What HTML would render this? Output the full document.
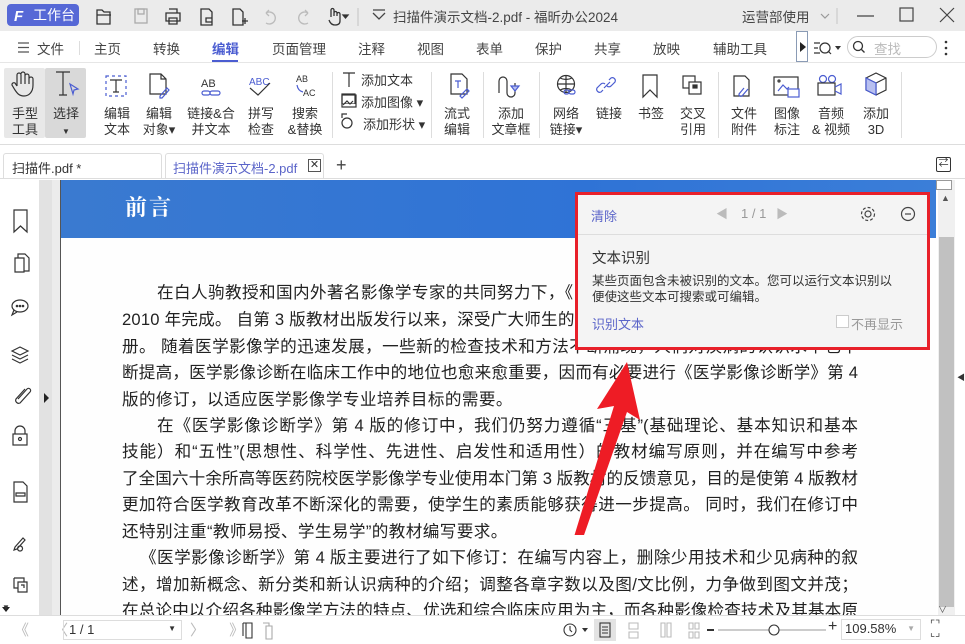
<!DOCTYPE html>
<html><head><meta charset="utf-8"><style>
*{margin:0;padding:0;box-sizing:border-box}
body{width:965px;height:644px;overflow:hidden;position:relative;background:#fff;font-family:"Liberation Sans","Noto Sans CJK SC",sans-serif;color:#333;font-size:13px}
.a{position:absolute}
.tb{left:0;top:0;width:965px;height:31px;background:#ebebeb}
.menu{left:0;top:31px;width:965px;height:32px;background:#fff;border-bottom:1px solid #e6e6e6}
.menu span{position:absolute;top:7px;font-size:13.5px;color:#444}
.rib{left:0;top:63px;width:965px;height:82px;background:#fff;border-bottom:1px solid #ddd}
.btn{position:absolute;top:40px;text-align:center;font-size:13px;line-height:16px;color:#333;white-space:nowrap}
.sep{position:absolute;top:72px;width:1px;height:66px;background:#ddd}
.tabs{left:0;top:145px;width:965px;height:34px;background:#fff;border-bottom:1px solid #ddd}
.ico{position:absolute}
.line{position:absolute;left:122px;width:736px;font-size:16.6px;color:#222;text-align:justify;text-align-last:justify;white-space:nowrap;height:26px;line-height:26px;font-family:"Liberation Sans","Noto Sans CJK SC",sans-serif}
</style></head><body>
<div class="a tb"></div>
<div class="a" style="left:7px;top:4px;width:72px;height:22px;background:#5668d6;border-radius:4px;color:#fff;font-size:14px;line-height:22px;padding-left:26px">工作台</div>
<div class="a" style="left:14px;top:8px;color:#fff;font-size:15px;font-weight:bold;font-style:italic">F</div>
<svg class="a" style="left:90px;top:4px" width="280" height="24" fill="none" stroke="#333" stroke-width="1.3">
<path d="M7 6h5l2 2h6v12H7z M7 11h14"/>
<rect x="45" y="5" width="12" height="14" stroke="#aaa"/><rect x="48" y="5" width="6" height="5" stroke="#aaa"/>
<path d="M76 9h14v8H76z M79 5h8v4 M79 14h8v6h-8z"/>
<path d="M111 5h8l3 3v13h-11z M116 14h6v4h-6z"/>
<path d="M143 5h7l3 3v13h-10z M152 17h6 M155 14v6"/>
<path d="M176 9a6 6 0 1 1 0 10 M176 9l3-3 M176 9l3 3" stroke="#bbb"/>
<path d="M218 9a6 6 0 1 0 0 10 M218 9l-3-3 M218 9l-3 3" stroke="#bbb"/>
<path d="M241 13v-7a1.5 1.5 0 0 1 3 0v6 M244 9a1.5 1.5 0 0 1 3 0v3 M247 10a1.5 1.5 0 0 1 3 0v7c0 3-2 4-5 4s-5-2-6-5"/>
<path d="M253 11h5l-2.5 3z" fill="#333"/>
<path d="M268 4v18" stroke="#ccc"/>
</svg>
<svg class="a" style="left:371px;top:8px" width="16" height="16" fill="none" stroke="#444" stroke-width="1.3"><path d="M2 5l6 6 6-6 M2 2h12"/></svg>
<div class="a" style="left:393px;top:6px;font-size:13.5px;color:#444">扫描件演示文档-2.pdf - 福昕办公2024</div>
<div class="a" style="left:742px;top:6px;font-size:13.5px;color:#444">运营部使用</div>
<svg class="a" style="left:815px;top:5px" width="150" height="22" fill="none" stroke="#444" stroke-width="1.2"><path d="M6 9l4 4 4-4" stroke="#999"/><path d="M22 3v16" stroke="#ccc"/><path d="M42 11h17"/><rect x="85" y="3" width="13" height="13"/><path d="M125 3l14 14 M139 3l-14 14"/></svg>

<div class="a menu">
<svg class="ico" style="left:17px;top:11px" width="14" height="12" stroke="#555" stroke-width="1.3"><path d="M1 1h11M1 5.5h11M1 10h11"/></svg>
<span style="left:37px">文件</span><div class="a" style="left:79px;top:10px;width:1px;height:14px;background:#ddd"></div>
<span style="left:94px">主页</span><span style="left:153px">转换</span>
<span style="left:212px;color:#4b5dd1;font-weight:bold">编辑</span>
<div class="a" style="left:212px;top:29px;width:26px;height:2px;background:#4b5dd1"></div>
<span style="left:272px">页面管理</span><span style="left:358px">注释</span><span style="left:417px">视图</span><span style="left:476px">表单</span><span style="left:535px">保护</span><span style="left:594px">共享</span><span style="left:653px">放映</span><span style="left:713px">辅助工具</span>
<div class="a" style="left:796px;top:0;width:12px;height:31px;border:1px solid #8a9bb5;background:#fff"></div>
<svg class="ico" style="left:799px;top:11px" width="8" height="10"><path d="M1 0v10l6-5z" fill="#222"/></svg>
<svg class="ico" style="left:813px;top:8px" width="30" height="18" fill="none" stroke="#333" stroke-width="1.2"><path d="M1 4h6M1 9h4M1 14h6"/><circle cx="12" cy="9" r="5"/><path d="M15 12l3 3"/><path d="M22 7h6l-3 4z" fill="#333" stroke="none"/></svg>
<div class="a" style="left:847px;top:5px;width:90px;height:22px;border:1px solid #ccc;border-radius:11px"></div>
<svg class="ico" style="left:852px;top:9px" width="14" height="14" fill="none" stroke="#333" stroke-width="1.3"><circle cx="6" cy="6" r="4.5"/><path d="M9.5 9.5l3 3"/></svg>
<span style="left:874px;color:#bbb">查找</span>
<svg class="ico" style="left:944px;top:8px" width="4" height="18"><circle cx="2" cy="3" r="1.3" fill="#333"/><circle cx="2" cy="9" r="1.3" fill="#333"/><circle cx="2" cy="15" r="1.3" fill="#333"/></svg>
</div>

<div class="a rib"></div>
<div class="a" style="left:4px;top:68px;width:41px;height:70px;background:#e8e8e8;border-radius:2px"></div>
<div class="a" style="left:45px;top:68px;width:41px;height:70px;background:#d9d9d9;border-radius:2px"></div>
<svg class="a" style="left:0;top:68px" width="965" height="36" fill="none" stroke="#333" stroke-width="1.2">
<path d="M17 18v-11a2 2 0 0 1 4 0v9 M21 6a2 2 0 0 1 4 0v10 M25 8a2 2 0 0 1 4 0v8 M29 11a2 2 0 0 1 4 0v6c0 7-4 11-9 11s-7-3-9-6l-3-5a2 2 0 0 1 3-2l2 3"/>
<path d="M56 4h14 M63 4v23 M59 27h8"/><path d="M70 16l8 5-4 1-1 4z" stroke="#4b5dd1"/>
<rect x="106" y="8" width="20" height="20" stroke="#4b5dd1" stroke-dasharray="3 3"/><path d="M110 12h12M116 12v12M113 24h6"/>
<path d="M150 6h11l5 5v15h-16z M161 6v5h5"/><path d="M160 28l7-8 2 2-7 8h-2z" stroke="#4b5dd1"/>
<text x="201" y="19" font-size="11" fill="#333" stroke="none" font-family="Liberation Sans">AB</text><rect x="202" y="23" width="8" height="4" rx="2" stroke="#4b5dd1"/><rect x="210" y="23" width="10" height="4" rx="2" stroke="#4b5dd1"/>
<text x="249" y="17" font-size="10" fill="#4b5dd1" stroke="none" font-family="Liberation Sans">ABC</text><path d="M250 20l8 7 12-12"/>
<text x="296" y="14" font-size="9" fill="#333" stroke="none" font-family="Liberation Sans">AB</text><text x="303" y="28" font-size="9" fill="#333" stroke="none" font-family="Liberation Sans">AC</text><path d="M297 17q1 6 6 7" stroke="#4b5dd1"/>
<path d="M343 5h12 M349 5v14"/>
<rect x="342" y="26" width="13" height="10" />
<path d="M451 6h11l5 5v15h-16z"/><path d="M455 13h6M458 13v7" stroke="#4b5dd1"/><path d="M460 28l7-7 2 2-7 7z" stroke="#4b5dd1"/>
<path d="M499 25v-12a4 4 0 0 1 8 0v12a4 4 0 0 0 8 0v-10"/><path d="M511 18h8l-4 5z" stroke="#4b5dd1" fill="#b8c0f0"/>
<circle cx="566" cy="16" r="8.5"/><path d="M557.5 16h17M566 7.5v17M560 10q6 3 12 0M560 22q6-3 12 0"/><rect x="564" y="22" width="5" height="4" rx="2" stroke="#4b5dd1"/><rect x="569" y="22" width="6" height="4" rx="2" stroke="#4b5dd1"/>
<path d="M603 22l-2 2a3 3 0 0 1-4-4l4-4a3 3 0 0 1 4 0 M609 12l2-2a3 3 0 0 1 4 4l-4 4a3 3 0 0 1-4 0 M604 20l6-6" stroke="#4b5dd1"/>
<path d="M643 7h14v22l-7-7-7 7z"/>
<rect x="683" y="8" width="12" height="12"/><rect x="689" y="14" width="12" height="12" fill="#fff"/><rect x="693" y="17" width="4" height="3" fill="#333"/>
<path d="M734 8h11l4 4v16h-15z"/><path d="M744 20l-5 6a2 2 0 0 0 3 2l6-7" stroke="#4b5dd1"/>
<rect x="774" y="9" width="24" height="18"/><path d="M778 23l5-6 4 4 2-2" stroke="#4b5dd1"/><rect x="788" y="21" width="11" height="8" stroke="#4b5dd1" fill="#fff"/><circle cx="779" cy="13" r="1"/>
<circle cx="823" cy="11" r="3.5" stroke="#4b5dd1"/><circle cx="832" cy="11" r="3.5" stroke="#4b5dd1"/><rect x="818" y="15" width="17" height="12"/><path d="M835 19l6-3v10l-6-3" stroke="#4b5dd1"/>
<path d="M866 10l10-5 10 5v12l-10 5-10-5z M866 10l10 5 10-5 M876 15v12"/><path d="M866 10l10 5v12l-10-5z" fill="#b8c0f0" stroke="#4b5dd1"/>
</svg>
<svg class="a" style="left:340px;top:90px" width="20" height="46" fill="none" stroke="#333" stroke-width="1.2"><rect x="2" y="5" width="14" height="12"/><path d="M3 15l4-4 3 3 3-3"/><circle cx="7" cy="33" r="5"/><path d="M2 28v-4h5"/></svg>
<div class="btn" style="left:5px;top:106px;width:40px">手型<br>工具</div>
<div class="btn" style="left:46px;top:106px;width:40px">选择<br><span style="font-size:8px">▼</span></div>
<div class="btn" style="left:97px;top:106px;width:40px">编辑<br>文本</div>
<div class="btn" style="left:138px;top:106px;width:42px">编辑<br>对象▾</div>
<div class="btn" style="left:184px;top:106px;width:54px">链接&amp;合<br>并文本</div>
<div class="btn" style="left:241px;top:106px;width:40px">拼写<br>检查</div>
<div class="btn" style="left:284px;top:106px;width:42px">搜索<br>&amp;替换</div>
<div class="sep" style="left:332px"></div>
<div class="a" style="left:361px;top:70px;font-size:13px">添加文本</div>
<div class="a" style="left:361px;top:92px;font-size:13px">添加图像 ▾</div>
<div class="a" style="left:363px;top:114px;font-size:13px">添加形状 ▾</div>
<div class="sep" style="left:431px"></div>
<div class="btn" style="left:437px;top:106px;width:40px">流式<br>编辑</div>
<div class="sep" style="left:483px"></div>
<div class="btn" style="left:488px;top:106px;width:46px">添加<br>文章框</div>
<div class="sep" style="left:539px"></div>
<div class="btn" style="left:545px;top:106px;width:42px">网络<br>链接▾</div>
<div class="btn" style="left:589px;top:106px;width:40px">链接</div>
<div class="btn" style="left:631px;top:106px;width:40px">书签</div>
<div class="btn" style="left:673px;top:106px;width:40px">交叉<br>引用</div>
<div class="sep" style="left:718px"></div>
<div class="btn" style="left:723px;top:106px;width:42px">文件<br>附件</div>
<div class="btn" style="left:766px;top:106px;width:42px">图像<br>标注</div>
<div class="btn" style="left:809px;top:106px;width:44px">音频<br>&amp; 视频</div>
<div class="btn" style="left:855px;top:106px;width:42px">添加<br>3D</div>
<div class="sep" style="left:901px"></div>

<div class="a tabs"></div>
<div class="a" style="left:3px;top:153px;width:159px;height:26px;border:1px solid #ddd;border-bottom:none;border-radius:3px 3px 0 0;padding:4px 8px;font-size:13px">扫描件.pdf *</div>
<div class="a" style="left:165px;top:153px;width:159px;height:26px;border:1px solid #ddd;border-bottom:none;border-radius:3px 3px 0 0;padding:4px 7px;font-size:13px;color:#5b65c9">扫描件演示文档-2.pdf</div>
<div class="a" style="left:308px;top:159px;width:13px;height:13px;border:1px solid #555;font-size:11px;line-height:11px;text-align:center">✕</div>
<div class="a" style="left:336px;top:155px;font-size:18px;color:#444">+</div>
<div class="a" style="left:936px;top:157px;width:15px;height:15px;border:1px solid #333;border-radius:2px;font-size:10px;line-height:12px;text-align:center">⇄</div>

<div class="a" style="left:39px;top:180px;width:21px;height:435px;background:#e2e2e2"></div>
<div class="a" style="left:52px;top:180px;width:8px;height:435px;background:#ececec"></div>
<div class="a" style="left:60px;top:180px;width:1px;height:435px;background:#555"></div>
<svg class="a" style="left:0;top:180px" width="60" height="435" fill="none" stroke="#333" stroke-width="1.2">
<path d="M14 30h13v22l-6.5-6-6.5 6z"/>
<path d="M15 78h9v14h-9z M18 78v-4h7l4 4v13h-5"/>
<ellipse cx="20" cy="126" rx="8" ry="6"/><path d="M14 130l-2 5 5-3"/><circle cx="17" cy="126" r=".7" fill="#333"/><circle cx="20" cy="126" r=".7" fill="#333"/><circle cx="23" cy="126" r=".7" fill="#333"/>
<path d="M12 171l8-4 8 4-8 4z M12 175l8 4 8-4 M12 179l8 4 8-4"/>
<path d="M25 209l-9 10a3 3 0 0 0 4 4l10-11a2 2 0 0 0-3-3l-9 10"/>
<path d="M44 213v10l5-5z" fill="#222" stroke="none"/>
<rect x="13" y="254" width="14" height="11"/><path d="M15 254v-3a5 5 0 0 1 10 0v3"/><circle cx="20" cy="259" r="1.5"/>
<path d="M14 302h9l4 4v16h-13z M16 313h9v3h-9z"/>
<path d="M15 367l8-9 2 2-8 9-3 1z M20 366a2.5 2.5 0 1 0 .1 0"/>
<path d="M14 398h10v4 M14 398v10h4 M18 402h9v10h-9z M21 405h3v3"/>
<path d="M2 427h8l-4 5z" fill="#222" stroke="none"/>
</svg>

<div class="a" style="left:61px;top:180px;width:875px;height:435px;background:#fefefe"></div>
<div class="a" style="left:61px;top:180px;width:875px;height:58px;background:linear-gradient(90deg,#3a7ad0,#2f73d6 60%,#3b7ed8)"></div>
<div class="a" style="left:125px;top:191px;color:#fff;font-size:22px;font-weight:bold;font-family:'Noto Serif CJK SC',serif;letter-spacing:2px">前言</div>

<div class="line" style="top:280px;left:157px;width:701px;text-align-last:left;letter-spacing:0.4px">在白人驹教授和国内外著名影像学专家的共同努力下，《医学影像诊断学》第3版于</div>
<div class="line" style="top:307px;text-align-last:left;letter-spacing:0.2px">2010 年完成。 自第 3 版教材出版发行以来，深受广大师生的欢迎，共发行近二十余万</div>
<div class="line" style="top:334px">册。 随着医学影像学的迅速发展，一些新的检查技术和方法不断涌现，人们对疾病的认识水平也不</div>
<div class="line" style="top:360px">断提高，医学影像诊断在临床工作中的地位也愈来愈重要，因而有必要进行《医学影像诊断学》第 4</div>
<div class="line" style="top:387px;text-align-last:left;letter-spacing:0.4px">版的修订，以适应医学影像学专业培养目标的需要。</div>
<div class="line" style="top:413px;left:157px;width:701px">在《医学影像诊断学》第 4 版的修订中，我们仍努力遵循“三基”(基础理论、基本知识和基本</div>
<div class="line" style="top:439px">技能）和“五性”(思想性、科学性、先进性、启发性和适用性）的教材编写原则，并在编写中参考</div>
<div class="line" style="top:466px">了全国六十余所高等医药院校医学影像学专业使用本门第 3 版教材的反馈意见，目的是使第 4 版教材</div>
<div class="line" style="top:492px">更加符合医学教育改革不断深化的需要，使学生的素质能够获得进一步提高。 同时，我们在修订中</div>
<div class="line" style="top:519px;text-align-last:left;letter-spacing:0.4px">还特别注重“教师易授、学生易学”的教材编写要求。</div>
<div class="line" style="top:545px;left:140px;width:718px">《医学影像诊断学》第 4 版主要进行了如下修订：在编写内容上，删除少用技术和少见病种的叙</div>
<div class="line" style="top:572px">述，增加新概念、新分类和新认识病种的介绍；调整各章字数以及图/文比例，力争做到图文并茂；</div>
<div class="line" style="top:598px">在总论中以介绍各种影像学方法的特点、优选和综合临床应用为主，而各种影像检查技术及其基本原</div>

<div class="a" style="left:936px;top:180px;width:29px;height:435px;background:#fff"></div>
<div class="a" style="left:938px;top:180px;width:17px;height:435px;background:#f0f0f0"></div>
<div class="a" style="left:939px;top:237px;width:15px;height:370px;background:#c1c1c1"></div>
<div class="a" style="left:936px;top:180px;width:16px;height:10px;border:1px solid #999;background:#fff"></div>
<div class="a" style="left:941px;top:193px;font-size:9px;color:#555">▲</div>
<div class="a" style="left:957px;top:372px;font-size:8px;color:#333">◀</div>

<div class="a" style="left:575px;top:192px;width:355px;height:158px;border:3px solid #e8202a;background:#f4f4f4"></div>
<div class="a" style="left:578px;top:234px;width:349px;height:1px;background:#ddd"></div>
<div class="a" style="left:591px;top:206px;color:#5b65c9;font-size:13px">清除</div>
<div class="a" style="left:716px;top:205px;color:#bbb;font-size:12px">◀</div>
<div class="a" style="left:741px;top:206px;color:#999;font-size:13px">1 / 1</div>
<div class="a" style="left:776px;top:205px;color:#bbb;font-size:12px">▶</div>
<svg class="a" style="left:858px;top:204px" width="60" height="20" fill="none" stroke="#444" stroke-width="1.2"><circle cx="10" cy="10" r="3"/><circle cx="10" cy="10" r="6.5" stroke-dasharray="3 2"/><circle cx="50" cy="10" r="6.5"/><path d="M47 10h6"/></svg>
<div class="a" style="left:592px;top:247px;color:#333;font-size:14.5px">文本识别</div>
<div class="a" style="left:592px;top:273px;color:#333;font-size:12.5px;line-height:16px;width:320px">某些页面包含未被识别的文本。您可以运行文本识别以<br>便使这些文本可搜索或可编辑。</div>
<div class="a" style="left:592px;top:314px;color:#5b65c9;font-size:13px">识别文本</div>
<div class="a" style="left:836px;top:315px;width:13px;height:13px;border:1px solid #ccc;background:#fff"></div>
<div class="a" style="left:851px;top:314px;color:#999;font-size:13px">不再显示</div>

<svg class="a" style="left:550px;top:355px" width="110" height="180"><path d="M77 7l-30 47 17-3-52 170 7 2 58-166 13 8z" fill="#ee1c25"/></svg>

<div class="a" style="left:0;top:615px;width:965px;height:29px;background:#fff;border-top:1px solid #ddd"></div>
<div class="a" style="left:2px;top:603px;font-size:8px;color:#333">▼</div>
<div class="a" style="left:938px;top:603px;font-size:9px;color:#555">∨</div>
<div class="a" style="left:14px;top:619px;font-size:15px;color:#bbb;letter-spacing:10px">《 〈</div>
<div class="a" style="left:63px;top:620px;width:119px;height:20px;border:1px solid #ddd;font-size:13px;padding:1px 5px">1 / 1<span style="position:absolute;right:5px;top:3px;font-size:8px">▼</span></div>
<div class="a" style="left:190px;top:619px;font-size:15px;color:#bbb;letter-spacing:10px">〉 》</div>
<svg class="a" style="left:240px;top:620px" width="40" height="20" fill="none" stroke="#333" stroke-width="1.1"><path d="M6 3h6v15h-6z M3 3v13M3 3h3"/><path d="M26 6h6v13h-6z M23 3h6v3" stroke="#aaa"/></svg>
<svg class="a" style="left:560px;top:619px" width="270" height="22" fill="none" stroke="#333" stroke-width="1.1">
<circle cx="10" cy="11" r="6"/><path d="M10 7v4l2 2"/><path d="M22 9h6l-3 4z" fill="#333" stroke="none"/>
<rect x="34" y="0" width="22" height="22" fill="#e3e3e3" stroke="none"/><rect x="40" y="4" width="10" height="14"/><path d="M42 8h6M42 11h6M42 14h6"/>
<path d="M69 4h9v6h-9z M69 13h9v6h-9z" stroke="#bbb"/><path d="M101 4h4v14h-4z M107 4h4v14h-4z" stroke="#bbb"/><path d="M129 4h4v6h-4zM135 4h4v6h-4zM129 13h4v6h-4zM135 13h4v6h-4z" stroke="#bbb"/>
<path d="M147 11h7" stroke-width="2"/><path d="M158 11h108" stroke="#999"/><circle cx="214" cy="11" r="5" fill="#fff"/><path d="M268 11h0"/>
</svg>
<div class="a" style="left:828px;top:618px;font-size:16px;color:#333">+</div>
<div class="a" style="left:841px;top:619px;width:80px;height:21px;border:1px solid #ddd;font-size:13px;padding:1px 3px">109.58%<span style="position:absolute;right:5px;top:4px;font-size:8px;color:#aaa">▼</span></div>
<div class="a" style="left:930px;top:621px;font-size:11px;color:#444;line-height:8px">⌜⌝<br>⌞⌟</div>
</body></html>
